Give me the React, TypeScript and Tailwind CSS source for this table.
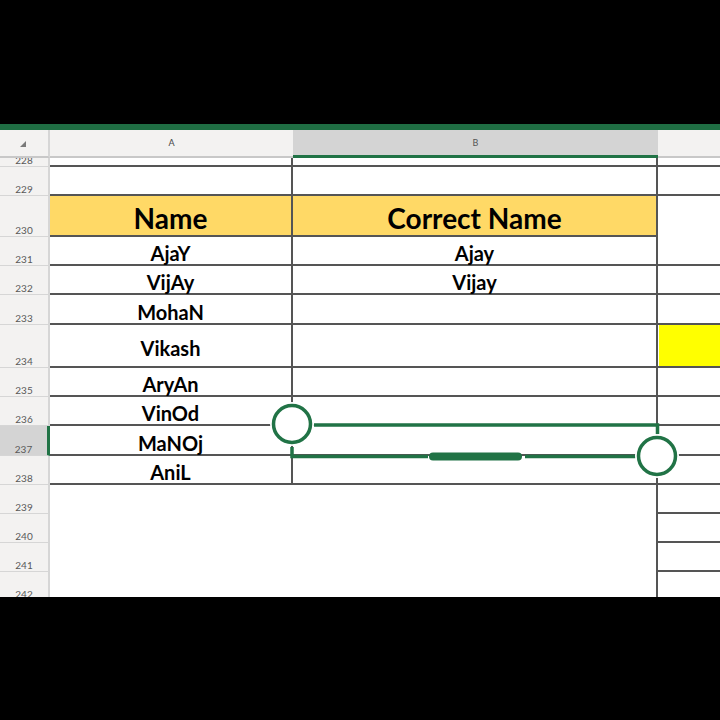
import React from 'react'

interface Row {
  n: number
  h: number
  a?: string
  b?: string
  inTable?: boolean
  header?: boolean
  cLine?: boolean
  cYellow?: boolean
  selected?: boolean
}

const rows: Row[] = [
  { n: 228, h: 9, inTable: true, cLine: true },
  { n: 229, h: 29, inTable: true, cLine: true },
  { n: 230, h: 41, a: 'Name', b: 'Correct Name', inTable: true, header: true },
  { n: 231, h: 29, a: 'AjaY', b: 'Ajay', inTable: true, cLine: true },
  { n: 232, h: 29, a: 'VijAy', b: 'Vijay', inTable: true, cLine: true },
  { n: 233, h: 30, a: 'MohaN', inTable: true, cLine: true },
  { n: 234, h: 43, a: 'Vikash', inTable: true, cLine: true, cYellow: true },
  { n: 235, h: 29, a: 'AryAn', inTable: true, cLine: true },
  { n: 236, h: 29, a: 'VinOd', inTable: true, cLine: true },
  { n: 237, h: 30, a: 'MaNOj', inTable: true, cLine: true, selected: true },
  { n: 238, h: 29, a: 'AniL', inTable: true, cLine: true },
  { n: 239, h: 29, cLine: true },
  { n: 240, h: 29, cLine: true },
  { n: 241, h: 29, cLine: true },
  { n: 242, h: 29 },
]

function SheetRow({ row }: { row: Row }) {
  const line = row.inTable ? 'border-b-2 border-b-[#555555]' : ''
  const text = row.header ? 'text-[28px] pt-[4px]' : 'text-[20px] pt-[5px]'
  return (
    <div className="flex shrink-0" style={{ height: row.h }}>
      <div
        className={`w-[50px] shrink-0 flex items-end justify-center overflow-hidden border-b border-b-[#d6d6d6] ${
          row.selected ? 'bg-[#d4d4d4] border-r-[3px] border-r-[#217346]' : 'bg-[#f3f2f1] border-r-2 border-r-[#d6d6d6]'
        }`}
      >
        <span className="text-[10px] leading-none text-[#595959] pb-[1px]">{row.n}</span>
      </div>
      <div
        className={`w-[243px] shrink-0 flex items-center justify-center leading-none font-bold text-black ${text} ${line} ${
          row.inTable ? 'border-r-2 border-r-[#555555]' : ''
        } ${row.header ? 'bg-[#ffd966]' : 'bg-white'}`}
      >
        {row.a}
      </div>
      <div
        className={`w-[365px] shrink-0 flex items-center justify-center leading-none font-bold text-black border-r-2 border-r-[#555555] ${text} ${line} ${
          row.header ? 'bg-[#ffd966]' : 'bg-white'
        }`}
      >
        {row.b}
      </div>
      <div className={`flex-1 pl-[1px] ${row.cLine ? 'border-b-2 border-b-[#555555]' : ''} bg-white`}>
        {row.cYellow && <div className="h-full bg-[#ffff00]" />}
      </div>
    </div>
  )
}

function SelectionHandles() {
  return (
    <svg className="absolute left-0 top-0 pointer-events-none" width="720" height="720" viewBox="0 0 720 720">
      <g stroke="#217346" fill="none" strokeLinecap="butt">
        <path d="M314 425 H657.5 V434" strokeWidth="3.5" />
        <path d="M292 447 V456.5 H428" strokeWidth="3.5" />
        <path d="M525 456.5 H636" strokeWidth="3.5" />
        <path d="M433 456.5 H518" strokeWidth="8" strokeLinecap="round" />
      </g>
      <circle cx="292" cy="424" r="22" fill="#ffffff" />
      <circle cx="292" cy="424" r="18.5" fill="#ffffff" stroke="#217346" strokeWidth="3.5" />
      <circle cx="657" cy="456" r="22" fill="#ffffff" />
      <circle cx="657" cy="456" r="18.5" fill="#ffffff" stroke="#217346" strokeWidth="3.5" />
    </svg>
  )
}

export default function App() {
  return (
    <div className="relative w-[720px] h-[720px] bg-black flex flex-col overflow-hidden" style={{ fontFamily: 'Lato, "Noto Sans", sans-serif' }}>
      <div className="h-[124px] shrink-0 bg-black" />
      <div className="h-[473px] shrink-0 flex flex-col overflow-hidden bg-white">
        <div className="h-[6px] shrink-0 bg-[#1f6e43]" />
        {/* column headers */}
        <div className="h-[28px] shrink-0 flex bg-[#f3f2f1]">
          <div className="w-[50px] shrink-0 flex items-center justify-center border-r-2 border-r-[#d6d6d6] border-b-2 border-b-[#c8c8c8]">
            <svg width="8" height="8" viewBox="0 0 8 8" className="ml-[-2px] mt-[2px]">
              <path d="M7 1 V7 H1 Z" fill="#7a7a7a" />
            </svg>
          </div>
          <div className="w-[243px] shrink-0 flex items-center justify-center text-[9px] text-[#444444] border-b-2 border-b-[#c8c8c8]">
            A
          </div>
          <div className="w-[365px] shrink-0 flex items-center justify-center text-[9px] text-[#555555] bg-[#d4d4d4] border-b-[3px] border-b-[#217346]">
            B
          </div>
          <div className="flex-1 border-b-2 border-b-[#c8c8c8]" />
        </div>
        {rows.map((r) => (
          <SheetRow key={r.n} row={r} />
        ))}
      </div>
      <div className="flex-1 bg-black" />
      <SelectionHandles />
    </div>
  )
}
